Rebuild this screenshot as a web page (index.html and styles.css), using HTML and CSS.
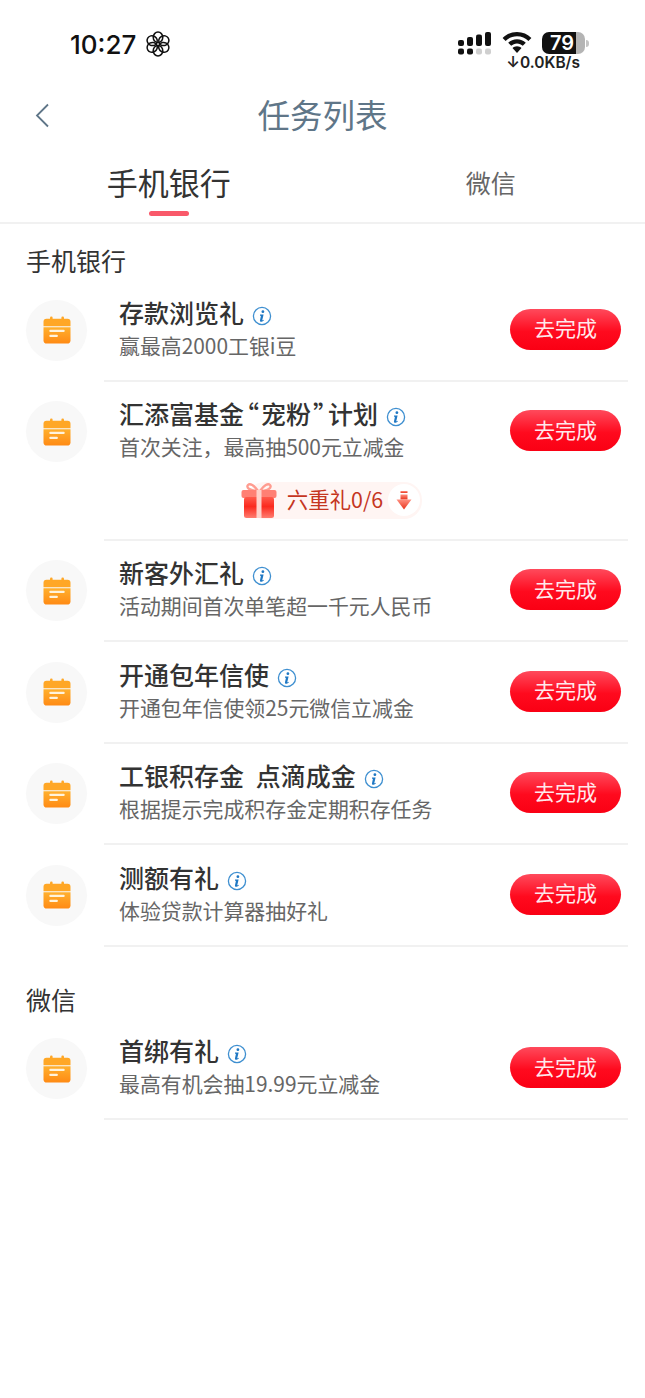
FILE: index.html
```html
<!DOCTYPE html>
<html lang="zh-CN">
<head>
  <meta charset="UTF-8" />
  <meta name="viewport" content="width=device-width, initial-scale=1.0"/>
  <title>任务列表</title>
  <link rel="stylesheet" href="styles.css">
</head>
<body>

  <svg class="defs" width="0" height="0">
    <defs>
      <linearGradient id="calGrad" x1="0" y1="0" x2="0" y2="1">
        <stop offset="0" stop-color="#ffb02e"/>
        <stop offset="1" stop-color="#ff8a14"/>
      </linearGradient>
      <linearGradient id="giftGrad" x1="0" y1="0" x2="0" y2="1">
        <stop offset="0" stop-color="#ff5a4c"/>
        <stop offset="0.45" stop-color="#fb2a1e"/>
        <stop offset="1" stop-color="#ff7d70"/>
      </linearGradient>
      <linearGradient id="arrowGrad" x1="0" y1="0" x2="0" y2="1">
        <stop offset="0" stop-color="#ff9080"/>
        <stop offset="1" stop-color="#e8331c"/>
      </linearGradient>
      <symbol id="cal" viewBox="0 0 28 28">
        <rect x="7" y="0.5" width="2.6" height="5" rx="1.2" fill="#ffa726"/>
        <rect x="18.4" y="0.5" width="2.6" height="5" rx="1.2" fill="#ffa726"/>
        <path d="M3.5 2.8h21a3 3 0 0 1 3 3v4.4H.5V5.8a3 3 0 0 1 3-3z" fill="#ffa726"/>
        <path d="M.5 11.2h27v13a3.4 3.4 0 0 1-3.4 3.4H3.9A3.4 3.4 0 0 1 .5 24.200z" fill="url(#calGrad)"/>
        <rect x="6.300" y="13.800" width="15.400" height="2.300" rx="1" fill="#fff3dc"/>
        <rect x="6.300" y="18.800" width="8.600" height="2.300" rx="1" fill="#fff3dc"/>
      </symbol>
      <symbol id="info" viewBox="0 0 20 20">
        <circle cx="10" cy="10" r="8.600" fill="#fff" stroke="#3e8fd0" stroke-width="1.300"/>
        <circle cx="10.900" cy="5.700" r="1.400" fill="#1f78c4"/>
        <path d="M8 8.500h3.600l-1.300 5.400c-.1.500.3.600 1.500-.1l.2.500c-1.300 1.100-2.200 1.500-3 1.500-.9 0-1.200-.6-1-1.500l.9-4.400-.9-.4z" fill="#1f78c4"/>
      </symbol>
    </defs>
  </svg>

  <div class="status-bar">
    <div class="status-left">
      <span class="clock">10:27</span>
      <svg class="flower" viewBox="0 0 26 26" fill="none" stroke="#111" stroke-width="1.500">
        <ellipse cx="13" cy="6.300" rx="4.800" ry="5.200"/>
        <ellipse cx="13" cy="6.300" rx="4.800" ry="5.200" transform="rotate(60 13 13)"/>
        <ellipse cx="13" cy="6.300" rx="4.800" ry="5.200" transform="rotate(120 13 13)"/>
        <ellipse cx="13" cy="6.300" rx="4.800" ry="5.200" transform="rotate(180 13 13)"/>
        <ellipse cx="13" cy="6.300" rx="4.800" ry="5.200" transform="rotate(240 13 13)"/>
        <ellipse cx="13" cy="6.300" rx="4.800" ry="5.200" transform="rotate(300 13 13)"/>
      </svg>
    </div>
    <div class="status-right">
      <div class="status-icons">
        <svg class="signal" width="34" height="23" viewBox="0 0 34 23" fill="#111">
          <rect x="0" y="8" width="6" height="6" rx="2"/>
          <rect x="9" y="5" width="6" height="9" rx="2"/>
          <rect x="18" y="2.500" width="6" height="11.500" rx="2"/>
          <rect x="27" y="0" width="6" height="14" rx="2"/>
          <rect x="0" y="16.500" width="6" height="6" rx="2"/>
          <rect x="9" y="16.500" width="6" height="6" rx="2"/>
          <rect x="18" y="16.500" width="6" height="6" rx="2" fill="#cfcfcf"/>
          <rect x="27" y="16.500" width="6" height="6" rx="2" fill="#cfcfcf"/>
        </svg>
        <svg class="wifi" width="30" height="22" viewBox="0 0 30 22" fill="#111">
          <path d="M15 0C9.300 0 4.300 2.200.600 5.900l3 3C6.500 6 10.500 4.200 15 4.200S23.500 6 26.400 8.900l3-3C25.700 2.200 20.700 0 15 0z"/>
          <path d="M15 7.200c-3.400 0-6.500 1.400-8.800 3.600l3 3c1.500-1.400 3.500-2.400 5.800-2.400s4.300 1 5.800 2.400l3-3C21.500 8.600 18.400 7.200 15 7.200z"/>
          <path d="M15 14.200c-1.800 0-3.300.7-4.500 1.800L15 21l4.500-5c-1.200-1.100-2.700-1.800-4.500-1.800z"/>
        </svg>
        <div class="battery">
          <div class="battery-body"><span class="battery-level">79</span></div>
          <span class="battery-tip"></span>
        </div>
      </div>
      <div class="net-speed">↓0.0KB/s</div>
    </div>
  </div>

  <header class="nav">
    <svg class="back" width="16" height="26" viewBox="0 0 16 26" fill="none" stroke="#5f7688" stroke-width="1.800">
      <path d="M14 1.500 3 12.500 14 23.500"/>
    </svg>
    <h1 class="nav-title">任务列表</h1>
  </header>

  <nav class="tabs">
    <div class="tab tab--active">手机银行</div>
    <div class="tab">微信</div>
  </nav>

  <h2 class="section-title">手机银行</h2>
  <ul class="task-list">
    <li class="task">
      <div class="task-main">
        <span class="task-icon"><svg width="28" height="28"><use href="#cal"/></svg></span>
        <div class="task-body">
          <div class="task-name"><span>存款浏览礼</span><svg class="info" width="20" height="20"><use href="#info"/></svg></div>
          <div class="task-desc">赢最高2000工银i豆</div>
        </div>
        <button class="btn"><span>去完成</span></button>
      </div>
    </li>
    <li class="task task--gift">
      <div class="task-main">
        <span class="task-icon"><svg width="28" height="28"><use href="#cal"/></svg></span>
        <div class="task-body">
          <div class="task-name"><span>汇添富基金<span class="quote">“</span>宠粉<span class="quote">”</span>计划</span><svg class="info" width="20" height="20"><use href="#info"/></svg></div>
          <div class="task-desc">首次关注，最高抽500元立减金</div>
        </div>
        <button class="btn"><span>去完成</span></button>
      </div>
      <div class="gift-row">
        <div class="gift-pill">
          <svg class="gift-icon" width="36" height="37" viewBox="0 0 36 37">
            <path d="M17 9C13 3 9 1 7 3s1 6 10 6zM19 9c4-6 8-8 10-6s-1 6-10 6z" fill="none" stroke="#ff9c90" stroke-width="2.400"/>
            <rect x="0.500" y="8" width="35" height="8" rx="2" fill="#ff8074"/>
            <rect x="3" y="15" width="30" height="21" rx="2.500" fill="url(#giftGrad)"/>
            <rect x="15.500" y="8" width="5" height="28" fill="#ffd2cb"/>
          </svg>
          <span class="gift-text">六重礼0/6</span>
          <span class="gift-arrow">
            <svg width="16" height="19" viewBox="0 0 16 19" fill="url(#arrowGrad)">
              <rect x="4.500" y="0" width="7" height="2"/>
              <rect x="4.500" y="3.500" width="7" height="5"/>
              <path d="M.5 8.500h15L8 18.500z"/>
            </svg>
          </span>
        </div>
      </div>
    </li>
    <li class="task">
      <div class="task-main">
        <span class="task-icon"><svg width="28" height="28"><use href="#cal"/></svg></span>
        <div class="task-body">
          <div class="task-name"><span>新客外汇礼</span><svg class="info" width="20" height="20"><use href="#info"/></svg></div>
          <div class="task-desc">活动期间首次单笔超一千元人民币</div>
        </div>
        <button class="btn"><span>去完成</span></button>
      </div>
    </li>
    <li class="task">
      <div class="task-main">
        <span class="task-icon"><svg width="28" height="28"><use href="#cal"/></svg></span>
        <div class="task-body">
          <div class="task-name"><span>开通包年信使</span><svg class="info" width="20" height="20"><use href="#info"/></svg></div>
          <div class="task-desc">开通包年信使领25元微信立减金</div>
        </div>
        <button class="btn"><span>去完成</span></button>
      </div>
    </li>
    <li class="task">
      <div class="task-main">
        <span class="task-icon"><svg width="28" height="28"><use href="#cal"/></svg></span>
        <div class="task-body">
          <div class="task-name"><span>工银积存金 点滴成金</span><svg class="info" width="20" height="20"><use href="#info"/></svg></div>
          <div class="task-desc">根据提示完成积存金定期积存任务</div>
        </div>
        <button class="btn"><span>去完成</span></button>
      </div>
    </li>
    <li class="task">
      <div class="task-main">
        <span class="task-icon"><svg width="28" height="28"><use href="#cal"/></svg></span>
        <div class="task-body">
          <div class="task-name"><span>测额有礼</span><svg class="info" width="20" height="20"><use href="#info"/></svg></div>
          <div class="task-desc">体验贷款计算器抽好礼</div>
        </div>
        <button class="btn"><span>去完成</span></button>
      </div>
    </li>
  </ul>

  <h2 class="section-title section-title--next">微信</h2>
  <ul class="task-list">
    <li class="task">
      <div class="task-main">
        <span class="task-icon"><svg width="28" height="28"><use href="#cal"/></svg></span>
        <div class="task-body">
          <div class="task-name"><span>首绑有礼</span><svg class="info" width="20" height="20"><use href="#info"/></svg></div>
          <div class="task-desc">最高有机会抽19.99元立减金</div>
        </div>
        <button class="btn"><span>去完成</span></button>
      </div>
    </li>
  </ul>

</body>
</html>
```

FILE: styles.css
```css
* {
  box-sizing: border-box;
}

body {
  margin: 0;
  height: 1398px;
  background: #fff;
  font-family: "Noto Sans CJK SC", "Liberation Sans", sans-serif;
  color: #333;
  overflow: hidden;
}

.defs {
  position: absolute;
}

.status-bar {
  height: 80px;
  display: flex;
  justify-content: space-between;
  padding: 29px 56px 0 70px;
}

.status-left {
  display: flex;
  align-items: center;
  gap: 9px;
  height: 30px;
}

.clock {
  font-family: Inter, "Liberation Sans", sans-serif;
  font-size: 26px;
  font-weight: 500;
  color: #111;
}

.flower {
  width: 26px;
  height: 26px;
}

.status-right {
  display: flex;
  flex-direction: column;
  align-items: flex-end;
  width: 132px;
}

.status-icons {
  display: flex;
  align-items: center;
  gap: 10px;
  height: 28px;
}

.battery {
  display: flex;
  align-items: center;
  gap: 1px;
}

.battery-body {
  width: 43px;
  height: 22px;
  border-radius: 7px;
  background: linear-gradient(to right, #111 0 79%, #b4b4b4 79%);
  display: flex;
  align-items: center;
  justify-content: center;
}

.battery-level {
  font-family: Inter, "Liberation Sans", sans-serif;
  font-size: 20px;
  font-weight: 600;
  line-height: 20px;
  color: #fff;
  margin-left: -3px;
}

.battery-tip {
  width: 3px;
  height: 7px;
  border-radius: 0 3px 3px 0;
  background: #c4c4c4;
}

.net-speed {
  font-family: Inter, "Liberation Sans", sans-serif;
  font-size: 15.500px;
  font-weight: 600;
  line-height: 14px;
  color: #222;
  margin-top: -1px;
  margin-right: 9px;
  white-space: nowrap;
}

.nav {
  height: 70px;
  display: flex;
  align-items: center;
  justify-content: center;
  position: relative;
}

.back {
  position: absolute;
  left: 34px;
  top: 23px;
}

.nav-title {
  margin: 0 0 4px;
  font-size: 32.500px;
  font-weight: 400;
  color: #5f7688;
}

.tabs {
  height: 74px;
  display: flex;
  border-bottom: 2px solid #f1f1f1;
}

.tab {
  width: 50%;
  display: flex;
  justify-content: center;
  padding-top: 8px;
  font-size: 25px;
  line-height: 48px;
  color: #666;
  padding-left: 14px;
}

.tab--active {
  position: relative;
  font-size: 31px;
  color: #333;
  padding-left: 15px;
}

.tab--active::after {
  content: "";
  position: absolute;
  left: 149px;
  bottom: 6px;
  width: 40px;
  height: 5px;
  border-radius: 3px;
  background: #f9596a;
}

.section-title {
  margin: 18px 0 2px;
  padding-left: 26px;
  height: 36px;
  font-size: 25px;
  font-weight: 400;
  line-height: 36px;
  color: #333;
}

.section-title--next {
  margin-top: 34px;
}

.task-list {
  list-style: none;
  margin: 0;
  padding: 0;
}

.task {
  position: relative;
  height: 101.500px;
}

.task--gift {
  height: 159px;
}

.task::after {
  content: "";
  position: absolute;
  left: 104px;
  right: 17px;
  bottom: 0;
  height: 2px;
  background: #f1f1f1;
}

.task-main {
  height: 100px;
  display: flex;
  align-items: center;
  padding: 0 24px 0 26px;
}

.task-icon {
  flex: none;
  width: 61px;
  height: 61px;
  border-radius: 50%;
  background: #f8f8f8;
  display: flex;
  align-items: center;
  justify-content: center;
}

.task-body {
  flex: 1;
  margin-left: 32px;
  margin-bottom: 6px;
  min-width: 0;
}

.task-name {
  display: flex;
  align-items: center;
  font-size: 25px;
  font-weight: 500;
  line-height: 34px;
  color: #333;
  word-spacing: 6px;
}

.quote {
  font-feature-settings: "palt";
  padding: 0 2.250px;
}

.info {
  margin-left: 8px;
  margin-top: 8px;
}

.task-desc {
  font-size: 20.900px;
  line-height: 30px;
  color: #666;
  margin-top: 1px;
}

.btn {
  flex: none;
  width: 111px;
  height: 41px;
  margin-bottom: 2px;
  border: none;
  border-radius: 21px;
  background: linear-gradient(to bottom, #ff4a5c, #ff0a1e 55%, #fa0014);
  font-family: inherit;
  font-size: 21px;
  color: #ffe9ec;
  padding: 0 0 4px;
}

.gift-row {
  display: flex;
  justify-content: center;
  margin-top: 0;
  padding-right: 2px;
}

.gift-pill {
  display: flex;
  align-items: center;
  height: 37px;
  padding-right: 2px;
  margin-left: 26px;
  border-radius: 18px;
  background: #fff5f3;
}

.gift-icon {
  margin-left: -6px;
}

.gift-text {
  margin-left: 10px;
  padding-bottom: 4px;
  font-size: 21.400px;
  color: #c5361f;
}

.gift-arrow {
  width: 32px;
  height: 32px;
  margin-left: 5px;
  border-radius: 50%;
  background: #fff;
  display: flex;
  align-items: center;
  justify-content: center;
}
```
